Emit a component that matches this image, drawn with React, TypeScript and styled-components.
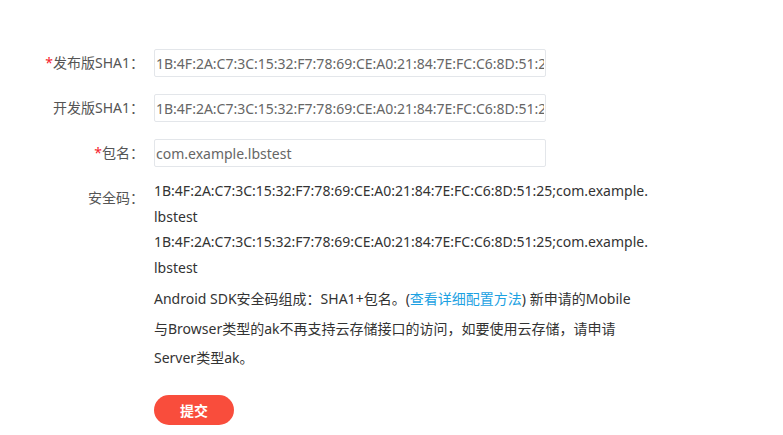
import React from 'react'
import styled, { createGlobalStyle } from 'styled-components'

const GlobalStyle = createGlobalStyle`
    html, body {
        margin: 0;
        padding: 0;
        background: #fff;
    }
    body {
        font-family: "Noto Sans", "Noto Sans CJK SC", sans-serif;
        font-size: 14px;
        color: #333;
    }
`

const sha1 = '1B:4F:2A:C7:3C:15:32:F7:78:69:CE:A0:21:84:7E:FC:C6:8D:51:25'
const pkg = 'com.example.lbstest'

const App = () => {
    return (
        <>
            <GlobalStyle />
            <Form>
                <Row>
                    <Label><Star>*</Star>发布版SHA1：</Label>
                    <Input defaultValue={sha1} readOnly />
                </Row>
                <Row>
                    <Label>开发版SHA1：</Label>
                    <Input defaultValue={sha1} readOnly />
                </Row>
                <Row>
                    <Label><Star>*</Star>包名：</Label>
                    <Input defaultValue={pkg} readOnly />
                </Row>
                <InfoRow>
                    <InfoLabel>安全码：</InfoLabel>
                    <Content>
                        <CodeLine>{sha1};com.example.<br />lbstest</CodeLine>
                        <CodeLine>{sha1};com.example.<br />lbstest</CodeLine>
                        <Note>
                            Android SDK安全码组成：SHA1+包名。(<Link href="#">查看详细配置方法</Link>) 新申请的Mobile与Browser类型的ak不再支持云存储接口的访问，如要使用云存储，请申请Server类型ak。
                        </Note>
                        <Submit>提交</Submit>
                    </Content>
                </InfoRow>
            </Form>
        </>
    )
}

const Form = styled.div`
    display: flex;
    flex-direction: column;
    padding-top: 49px;
    gap: 17px;
`;

const Row = styled.div`
    display: flex;
    align-items: center;
    height: 28px;
`;

const InfoRow = styled.div`
    display: flex;
    align-items: flex-start;
    margin-top: -6px;
`;

const Label = styled.div`
    width: 144px;
    margin-right: 10px;
    text-align: right;
    color: #555;
    white-space: nowrap;
    line-height: 22px;
    flex-shrink: 0;
`;

const InfoLabel = styled(Label)`
    padding-top: 9px;
`;

const Star = styled.span`
    color: #f5222d;
`;

const Input = styled.input`
    box-sizing: border-box;
    width: 392px;
    height: 28px;
    padding: 0 1px;
    border: 1px solid #e3e6ea;
    border-radius: 2px;
    font: inherit;
    font-size: 14px;
    color: #666;
    background: #fff;
    outline: none;
`;

const Content = styled.div`
    width: 500px;
    display: flex;
    flex-direction: column;
    align-items: flex-start;
`;

const CodeLine = styled.div`
    line-height: 25.5px;
    color: #333;
`;

const Note = styled.p`
    margin: 4px 0 0;
    line-height: 29.5px;
    color: #333;
    width: 490px;
`;

const Link = styled.a`
    color: #1ba1e2;
    text-decoration: none;
`;

const Submit = styled.button`
    margin-top: 22px;
    width: 80px;
    height: 30px;
    border: none;
    border-radius: 15px;
    background: #f94d3c;
    color: #fff;
    font: inherit;
    font-size: 14px;
    font-weight: bold;
    cursor: pointer;
`;

export default App;
